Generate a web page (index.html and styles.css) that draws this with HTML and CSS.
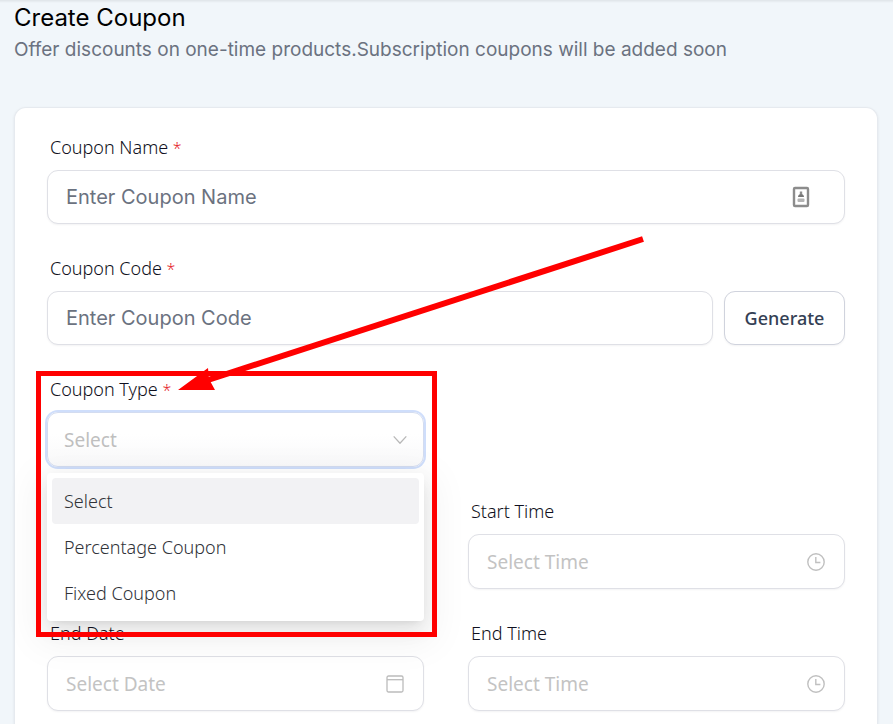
FILE: index.html
```html
<!DOCTYPE html>
<html lang="en">
<head>
<meta charset="utf-8">
<title>Create Coupon</title>
<link rel="stylesheet" href="styles.css">
</head>
<body>
<main class="page">
  <header class="page-head">
    <h1>Create Coupon</h1>
    <p>Offer discounts on one-time products.Subscription coupons will be added soon</p>
  </header>

  <form class="card">
    <div class="field wide">
      <label for="name">Coupon Name <span class="req">*</span></label>
      <div class="control">
        <input id="name" type="text" placeholder="Enter Coupon Name">
        <svg class="icon icon-contact" viewBox="0 0 18 22" aria-hidden="true">
          <rect x="2" y="2" width="14" height="18" rx="1" fill="#fff" stroke="#8c8c8c" stroke-width="2.4"/>
          <path d="M9 5.5v3" stroke="#8c8c8c" stroke-width="2.4"/>
          <path d="M6 11c0-4 6-4 6 0z" fill="#777"/>
          <rect x="5.500" y="12.500" width="7" height="3.500" rx="1" fill="#b4b4b4"/>
        </svg>
      </div>
    </div>

    <div class="field wide">
      <label for="code">Coupon Code <span class="req">*</span></label>
      <div class="code-row">
        <div class="control"><input id="code" type="text" placeholder="Enter Coupon Code"></div>
        <button type="button" class="generate">Generate</button>
      </div>
    </div>

    <div class="field type">
      <label for="type">Coupon Type <span class="req">*</span></label>
      <div class="control tall open">
        <select id="type">
          <option>Select</option>
        </select>
        <svg class="icon icon-chevron" viewBox="0 0 14 9" aria-hidden="true">
          <path d="M.7 .9 7 7.700 13.300 .9" fill="none" stroke="#b8b8b8" stroke-width="1.300"/>
        </svg>
      </div>
      <ul class="menu" role="listbox" aria-label="Coupon Type">
        <li role="option" aria-selected="true">Select</li>
        <li role="option" aria-selected="false">Percentage Coupon</li>
        <li role="option" aria-selected="false">Fixed Coupon</li>
      </ul>
      <div class="highlight"></div>
      <svg class="arrow" viewBox="0 0 470 156" aria-hidden="true">
        <path d="M465 3 30 144" stroke="#f00" stroke-width="6"/>
        <path d="M0 154 30 132 31 143 37 154z" fill="#f00"/>
      </svg>
    </div>

    <div class="field start-time">
      <label for="start-time">Start Time</label>
      <div class="control tall">
        <input id="start-time" class="picker" type="text" placeholder="Select Time">
        <svg class="icon icon-picker" viewBox="0 0 18 18" aria-hidden="true">
          <circle cx="9" cy="9" r="8.200" fill="none" stroke="#c0c0c0" stroke-width="1.400"/>
          <path d="M8.800 4v5.500h4.600" fill="none" stroke="#c0c0c0" stroke-width="1.400"/>
        </svg>
      </div>
    </div>

    <div class="field end-date">
      <label for="end-date">End Date</label>
      <div class="control tall">
        <input id="end-date" class="picker" type="text" placeholder="Select Date">
        <svg class="icon icon-picker" viewBox="0 0 18 18" aria-hidden="true">
          <rect x="1" y="1" width="16" height="16" rx="1.500" fill="none" stroke="#bcbcbc" stroke-width="1.300"/>
          <path d="M1 4.700h16" stroke="#bcbcbc" stroke-width="1.300"/>
        </svg>
      </div>
    </div>

    <div class="field end-time">
      <label for="end-time">End Time</label>
      <div class="control tall">
        <input id="end-time" class="picker" type="text" placeholder="Select Time">
        <svg class="icon icon-picker" viewBox="0 0 18 18" aria-hidden="true">
          <circle cx="9" cy="9" r="8.200" fill="none" stroke="#c0c0c0" stroke-width="1.400"/>
          <path d="M8.800 4v5.500h4.600" fill="none" stroke="#c0c0c0" stroke-width="1.400"/>
        </svg>
      </div>
    </div>
  </form>
</main>
</body>
</html>
```
FILE: styles.css
```css
* { box-sizing: border-box; }

body {
  margin: 0;
  background: #f1f6fa;
  font-family: "Noto Sans", sans-serif;
  font-size: 18px;
  font-weight: 350;
  color: #0f1020;
}

.page {
  display: flex;
  flex-direction: column;
  min-height: 100vh;
  padding: 2px 15px 0 14px;
  background: linear-gradient(#dfe4e8, #f1f6fa 3px);
}

.page-head {
  height: 105px;
  font-family: Inter, sans-serif;
  font-weight: 400;
}

h1 {
  margin: 0;
  font-size: 24px;
  line-height: 32px;
  font-weight: 400;
  color: #000;
}

.page-head p {
  margin: 0;
  font-size: 19px;
  line-height: 32px;
  color: #6b7280;
}

.card {
  flex: 1;
  display: grid;
  grid-template-columns: 1fr 1fr;
  align-content: start;
  gap: 31px 44px;
  padding: 26px 32px 13px;
  background: #fff;
  border: 1px solid #e6eaef;
  border-bottom: 0;
  border-radius: 12px 12px 0 0;
  box-shadow: 0 1px 3px rgba(16, 24, 40, .08);
}

.field { display: flex; flex-direction: column; }
.wide { grid-column: 1 / -1; }
.type { position: relative; grid-area: 3 / 1; }
.start-time { grid-area: 4 / 2; }
.end-date { grid-area: 5 / 1; }
.end-time { grid-area: 5 / 2; }

label {
  height: 36px;
  padding-left: 3px;
  line-height: 26px;
}

.req {
  font-size: 16px;
  color: #e5262b;
}

.control {
  position: relative;
  height: 54px;
}

.control.tall { height: 55px; }

input,
select,
.generate {
  width: 100%;
  height: 100%;
  margin: 0;
  border: 1px solid #dfe0e6;
  border-radius: 11px;
  background: #fff;
  box-shadow: 0 1px 2px rgba(16, 24, 40, .05);
  outline: 0;
}

input {
  padding: 0 18px;
  font: 20px Inter, sans-serif;
}

input::placeholder { color: #6b7280; opacity: 1; }
input.picker { font: 19px "Noto Sans", sans-serif; }
input.picker::placeholder { color: #c3c3c3; }

select {
  appearance: none;
  padding: 0 16px;
  font: 19px "Noto Sans", sans-serif;
  color: #bfbfbf;
}

.open select {
  border-color: #d3dcf0;
  background: linear-gradient(#fff 40%, #f9f9fa);
  box-shadow: 0 0 0 2px #cfdefb;
}

.code-row { display: flex; gap: 11px; }
.code-row .control { flex: 1; }

.generate {
  flex: none;
  width: 121px;
  height: 54px;
  border-color: #d0d3dd;
  font: 500 18px "Noto Sans", sans-serif;
  color: #344054;
}

.icon {
  position: absolute;
  top: 50%;
  transform: translateY(-50%);
}

.icon-contact { right: 35px; width: 18px; height: 22px; }
.icon-chevron { right: 17px; width: 14px; height: 9px; }
.icon-picker { right: 20px; width: 18px; height: 18px; }

.menu {
  position: absolute;
  z-index: 2;
  top: 97px;
  left: 0;
  right: 0;
  margin: 0;
  padding: 5px;
  list-style: none;
  color: #303238;
  background: #fff;
  border-radius: 4px;
  box-shadow:
    0 4px 8px -5px rgba(0, 0, 0, .12),
    0 8px 20px rgba(0, 0, 0, .08),
    0 12px 36px 12px rgba(0, 0, 0, .05);
}

.menu li {
  height: 46px;
  padding: 0 12px;
  line-height: 46px;
  border-radius: 4px;
}

.menu li[aria-selected="true"] { background: #f2f2f4; }

.highlight {
  position: absolute;
  z-index: 3;
  top: -5px;
  left: -11px;
  right: -13px;
  height: 266px;
  border: 5px solid #f00;
  pointer-events: none;
}

.arrow {
  position: absolute;
  z-index: 3;
  top: -140px;
  left: 131px;
  width: 470px;
  height: 156px;
  pointer-events: none;
}
```
